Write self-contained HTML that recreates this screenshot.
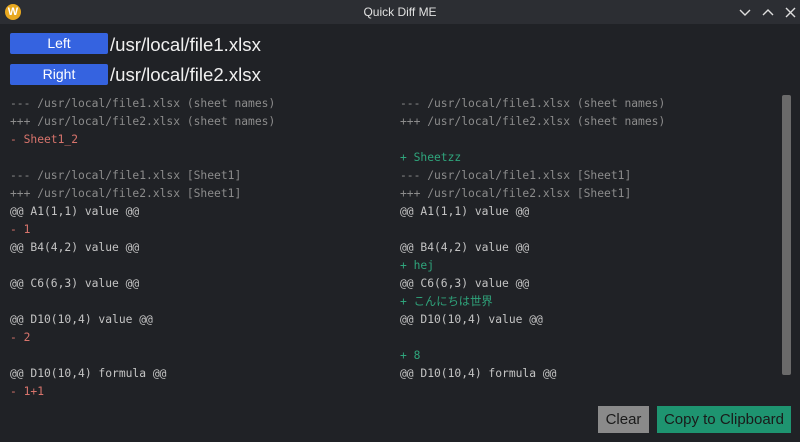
<!DOCTYPE html>
<html><head><style>
body{margin:0;width:800px;height:442px;background:#202226;overflow:hidden;font-family:"Liberation Sans",sans-serif;position:relative}
.tb{position:absolute;left:0;top:0;width:800px;height:24px;background:#2c2e33;color:#e0e0e0;font-size:12px;text-align:center;line-height:24px}
.logo{position:absolute;left:5px;top:4px;width:16px;height:16px;border-radius:50%;background:#e8a820;color:#fff;font-size:11px;line-height:16px;text-align:center;font-weight:bold}
.btn{position:absolute;left:10px;width:98px;height:21px;background:#3563e0;color:#fff;font-size:14px;text-align:center;line-height:21px;border-radius:2px}
.path{position:absolute;left:110px;color:#f0f0f0;font-size:18.6px}
.col{position:absolute;top:95px;font-family:"DejaVu Sans Mono","Noto Sans CJK JP",monospace;font-size:11.3px;line-height:18px;white-space:pre}
.h{color:#8c8c8c}.n{color:#c4c4c4}.r{color:#d8746c}.g{color:#2fa57c}
.sb{position:absolute;left:782px;top:95px;width:9px;height:280px;background:#6a6a6a;border-radius:2px}
.b2{position:absolute;top:406px;height:27px;font-size:15px;line-height:27px;text-align:center;color:#1a1a1a}
</style></head><body>
<div class="tb">Quick Diff ME<div class="logo">W</div>
<svg style="position:absolute;left:738px;top:7px" width="60" height="12" fill="none" stroke="#ddd" stroke-width="1.4"><path d="M2 3l5 5 5-5"/><path d="M25 8l5-5 5 5"/><path d="M48 1l9 9M57 1l-9 9"/></svg></div>
<div class="btn" style="top:33px">Left</div><div class="path" style="top:34px">/usr/local/file1.xlsx</div>
<div class="btn" style="top:64px">Right</div><div class="path" style="top:64px">/usr/local/file2.xlsx</div>
<div class="col" style="left:10px"><span class="h">--- /usr/local/file1.xlsx (sheet names)
+++ /usr/local/file2.xlsx (sheet names)</span>
<span class="r">- Sheet1_2</span>

<span class="h">--- /usr/local/file1.xlsx [Sheet1]
+++ /usr/local/file2.xlsx [Sheet1]</span>
<span class="n">@@ A1(1,1) value @@</span>
<span class="r">- 1</span>
<span class="n">@@ B4(4,2) value @@</span>

<span class="n">@@ C6(6,3) value @@</span>

<span class="n">@@ D10(10,4) value @@</span>
<span class="r">- 2</span>

<span class="n">@@ D10(10,4) formula @@</span>
<span class="r">- 1+1</span></div>
<div class="col" style="left:400px"><span class="h">--- /usr/local/file1.xlsx (sheet names)
+++ /usr/local/file2.xlsx (sheet names)</span>

<span class="g">+ Sheetzz</span>
<span class="h">--- /usr/local/file1.xlsx [Sheet1]
+++ /usr/local/file2.xlsx [Sheet1]</span>
<span class="n">@@ A1(1,1) value @@</span>

<span class="n">@@ B4(4,2) value @@</span>
<span class="g">+ hej</span>
<span class="n">@@ C6(6,3) value @@</span>
<span class="g">+ こんにちは世界</span>
<span class="n">@@ D10(10,4) value @@</span>

<span class="g">+ 8</span>
<span class="n">@@ D10(10,4) formula @@</span></div>
<div class="sb"></div>
<div class="b2" style="left:598px;width:51px;background:#8a8a8a">Clear</div>
<div class="b2" style="left:657px;width:134px;background:#1e9470">Copy to Clipboard</div>
</body></html>
